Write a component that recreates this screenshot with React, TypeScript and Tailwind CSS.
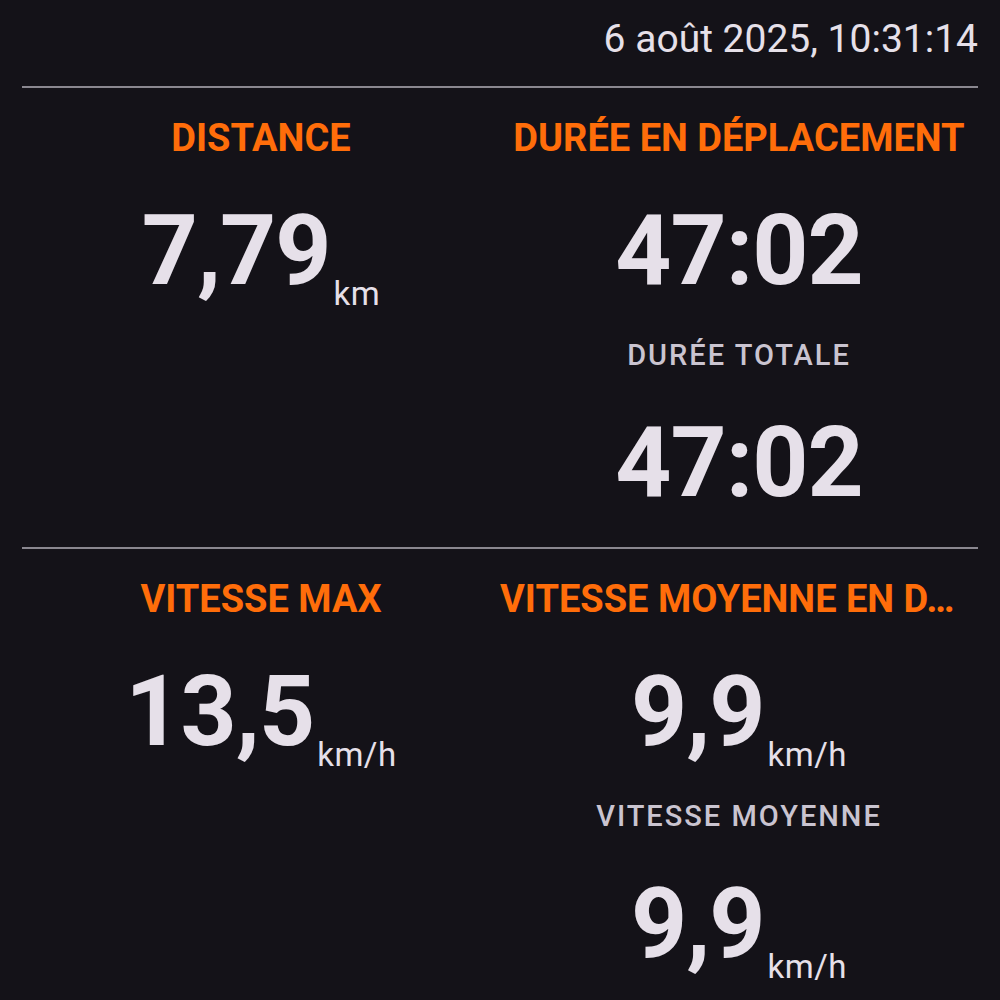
import React from "react";

const font = { fontFamily: "Roboto, 'Noto Sans', sans-serif" };

function Value({ v, unit }: { v: string; unit?: string }) {
  return (
    <div className="flex justify-center whitespace-nowrap">
      <span className="text-[98px] font-bold leading-none text-[#e6e0e9] tracking-[-1px]">{v}</span>
      {unit && (
        <span className="text-[33px] leading-none text-[#e6e0e9] self-end translate-y-[10px] ml-[3px] tracking-[0.5px]">{unit}</span>
      )}
    </div>
  );
}

function Heading({ children, start }: { children: React.ReactNode; start?: boolean }) {
  return (
    <div
      className={
        start
          ? "text-[38px] font-bold leading-[46px] text-[#ff6d0a] text-left truncate"
          : "text-[38px] font-bold leading-[46px] text-[#ff6d0a] text-center truncate"
      }
    >
      {children}
    </div>
  );
}

function Label({ children }: { children: React.ReactNode }) {
  return (
    <div className="text-[29px] font-medium leading-none text-[#cac4d0] text-center tracking-[2px]">{children}</div>
  );
}

function Section({
  left,
  leftV,
  leftU,
  right,
  rightStart,
  rV1,
  rU,
  label,
  rV2,
}: {
  left: string;
  leftV: string;
  leftU?: string;
  right: string;
  rightStart?: boolean;
  rV1: string;
  rU?: string;
  label: string;
  rV2: string;
}) {
  return (
    <div className="grid grid-cols-2 pt-[27px] pb-[35px]">
      <div className="flex flex-col min-w-0">
        <Heading>{left}</Heading>
        <div className="mt-[41px]">
          <Value v={leftV} unit={leftU} />
        </div>
      </div>
      <div className="flex flex-col min-w-0">
        <Heading start={rightStart}>{right}</Heading>
        <div className="mt-[41px]">
          <Value v={rV1} unit={rU} />
        </div>
        <div className="mt-[41px]">
          <Label>{label}</Label>
        </div>
        <div className="mt-[44px]">
          <Value v={rV2} unit={rU} />
        </div>
      </div>
    </div>
  );
}

export default function App() {
  return (
    <div className="w-[1000px] h-[1000px] bg-[#141218] overflow-hidden" style={font}>
      <div className="px-[22px]">
        <div className="flex justify-end pt-[20px] pb-[27px]">
          <span className="text-[39px] leading-none text-[#e6e0e9]">6 août 2025, 10:31:14</span>
        </div>
        <div className="h-[2px] bg-[#8a878f]" />
        <Section
          left="DISTANCE"
          leftV="7,79"
          leftU="km"
          right="DURÉE EN DÉPLACEMENT"
          rV1="47:02"
          label="DURÉE TOTALE"
          rV2="47:02"
        />
        <div className="h-[2px] bg-[#8a878f]" />
        <Section
          left="VITESSE MAX"
          leftV="13,5"
          leftU="km/h"
          right="VITESSE MOYENNE EN D…"
          rightStart
          rV1="9,9"
          rU="km/h"
          label="VITESSE MOYENNE"
          rV2="9,9"
        />
      </div>
    </div>
  );
}
